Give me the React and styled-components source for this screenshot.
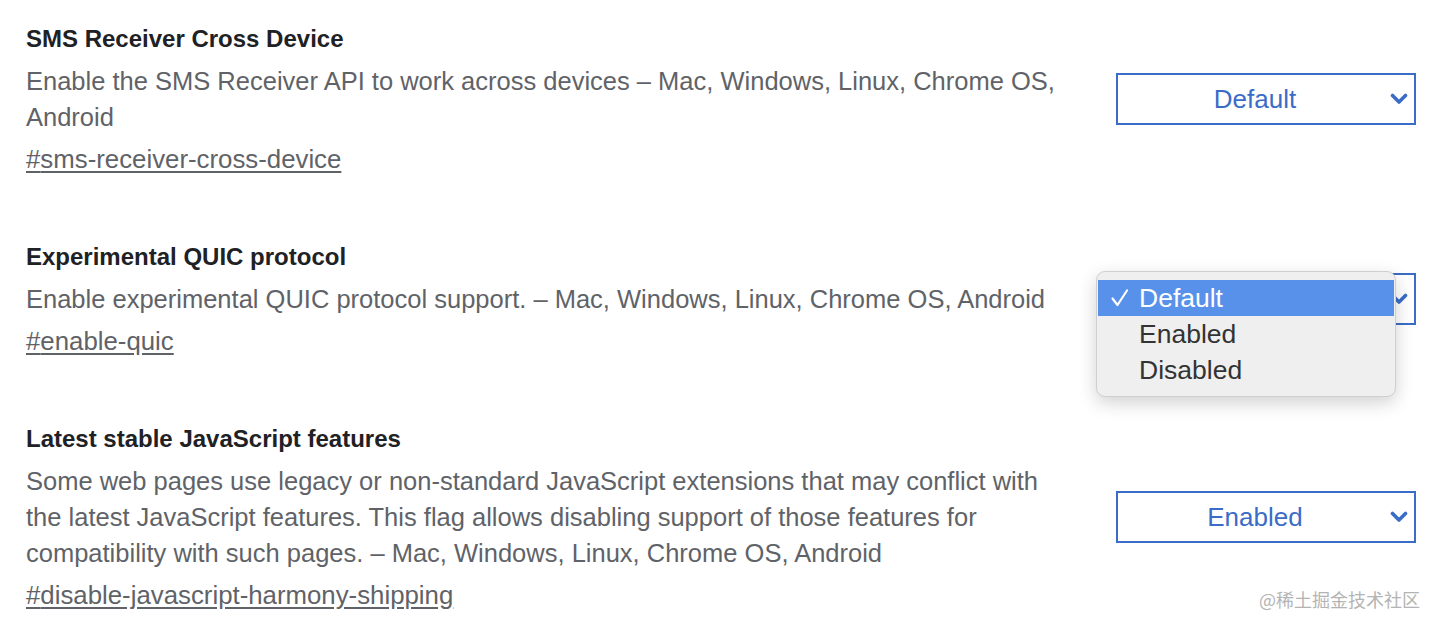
import React from 'react'
import styled, { createGlobalStyle } from 'styled-components'

const GlobalStyle = createGlobalStyle`
  html, body {
    margin: 0;
    padding: 0;
    background: #ffffff;
  }
  body {
    font-family: 'Liberation Sans', Arial, sans-serif;
  }
`

const experiments = [
  {
    id: 'sms-receiver-cross-device',
    name: 'SMS Receiver Cross Device',
    desc: 'Enable the SMS Receiver API to work across devices – Mac, Windows, Linux, Chrome OS, Android',
    value: 'Default',
  },
  {
    id: 'enable-quic',
    name: 'Experimental QUIC protocol',
    desc: 'Enable experimental QUIC protocol support. – Mac, Windows, Linux, Chrome OS, Android',
    value: 'Default',
    open: true,
  },
  {
    id: 'disable-javascript-harmony-shipping',
    name: 'Latest stable JavaScript features',
    desc: 'Some web pages use legacy or non-standard JavaScript extensions that may conflict with the latest JavaScript features. This flag allows disabling support of those features for compatibility with such pages. – Mac, Windows, Linux, Chrome OS, Android',
    value: 'Enabled',
  },
]

const options = ['Default', 'Enabled', 'Disabled']

const Chevron = () => (
  <svg width="18" height="12" viewBox="0 0 18 12">
    <polyline
      points="2.5,2.5 9,9 15.5,2.5"
      fill="none"
      stroke="#3b6cc7"
      strokeWidth="3.6"
      strokeLinecap="round"
      strokeLinejoin="round"
    />
  </svg>
)

const Check = () => (
  <svg width="20" height="20" viewBox="0 0 20 20">
    <polyline
      points="2.5,10.5 7.5,17 17,2.5"
      fill="none"
      stroke="#ffffff"
      strokeWidth="2.2"
      strokeLinecap="round"
      strokeLinejoin="round"
    />
  </svg>
)

const App = () => {
  return (
    <>
      <GlobalStyle />
      <Page>
        {experiments.map((exp) => (
          <Row key={exp.id}>
            <Info>
              <Title>{exp.name}</Title>
              <Desc>{exp.desc}</Desc>
              <Link>#{exp.id}</Link>
            </Info>
            <SelectWrap>
              <Select>
                <span>{exp.value}</span>
                <ChevronBox>
                  <Chevron />
                </ChevronBox>
              </Select>
              {exp.open && (
                <Menu>
                  {options.map((opt) => (
                    <MenuItem key={opt} active={opt === exp.value}>
                      {opt === exp.value && (
                        <CheckBox>
                          <Check />
                        </CheckBox>
                      )}
                      {opt}
                    </MenuItem>
                  ))}
                </Menu>
              )}
            </SelectWrap>
          </Row>
        ))}
        <Watermark>@稀土掘金技术社区</Watermark>
      </Page>
    </>
  )
}

const Page = styled.div`
  position: relative;
  width: 1440px;
  height: 630px;
  overflow: hidden;
  box-sizing: border-box;
  padding: 21px 24px 0 26px;
  display: flex;
  flex-direction: column;
  gap: 62px;
`

const Row = styled.section`
  display: flex;
  align-items: center;
  justify-content: space-between;
`

const Info = styled.div`
  width: 1040px;
  display: flex;
  flex-direction: column;
`

const Title = styled.h2`
  margin: 0;
  font-size: 24px;
  line-height: 36px;
  font-weight: 700;
  color: #202124;
`

const Desc = styled.p`
  margin: 6px 0 0;
  font-size: 25.5px;
  line-height: 36px;
  color: #5f6368;
`

const Link = styled.a`
  margin-top: 6px;
  font-size: 25.8px;
  line-height: 36px;
  color: #5f6368;
  text-decoration: underline;
  text-underline-offset: 3px;
  align-self: flex-start;
`

const SelectWrap = styled.div`
  position: relative;
  flex: none;
`

const Select = styled.div`
  position: relative;
  box-sizing: border-box;
  width: 300px;
  height: 52px;
  border: 2px solid #3b6cc7;
  background: #ffffff;
  display: flex;
  align-items: center;
  justify-content: center;
  padding-right: 22px;
  font-size: 26px;
  color: #3b6cc7;
`

const ChevronBox = styled.span`
  position: absolute;
  right: 6px;
  top: 50%;
  transform: translateY(-50%);
  display: flex;
`

const Menu = styled.div`
  position: absolute;
  left: -20px;
  top: -2px;
  width: 300px;
  box-sizing: border-box;
  padding: 8px 1px 8px;
  background: #efefef;
  border: 1px solid #cfcfcf;
  border-radius: 9px;
  box-shadow: 0 6px 18px rgba(0, 0, 0, 0.18);
`

const MenuItem = styled.div`
  position: relative;
  height: 36px;
  display: flex;
  align-items: center;
  padding-left: 41px;
  font-size: 26.5px;
  color: ${(p) => (p.active ? '#ffffff' : '#333333')};
  background: ${(p) => (p.active ? '#5891ea' : 'transparent')};
`

const CheckBox = styled.span`
  position: absolute;
  left: 12px;
  top: 8px;
  display: flex;
`

const Watermark = styled.div`
  position: absolute;
  right: 20px;
  bottom: 18px;
  font-size: 18px;
  color: #b4b4b4;
  font-family: 'Noto Sans CJK SC', sans-serif;
`

export default App
